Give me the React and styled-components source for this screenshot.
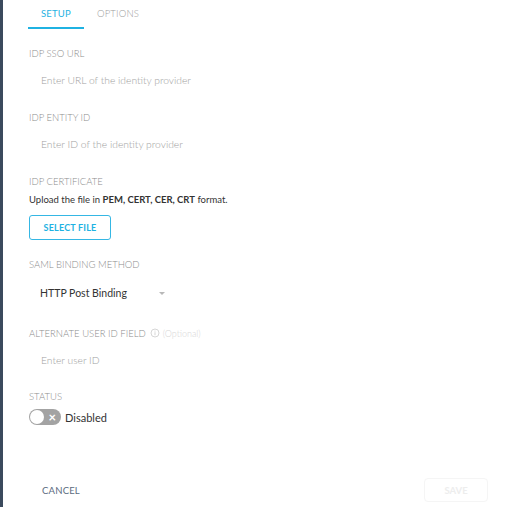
import React from 'react'
import styled, { createGlobalStyle } from 'styled-components'

const GlobalStyle = createGlobalStyle`
  html, body {
    margin: 0;
    padding: 0;
    background: #fff;
    font-family: Lato, "Open Sans", sans-serif;
  }
`

const Page = styled.div`
  display: flex;
  min-height: 100vh;
`

const SideEdge = styled.div`
  width: 3px;
  background: #3b4a5d;
  flex-shrink: 0;
`

const Main = styled.div`
  flex: 1;
  display: flex;
  flex-direction: column;
`

const Tabs = styled.div`
  display: flex;
  padding-left: 25px;
`

const Tab = styled.div`
  height: 27px;
  padding: 0 13px;
  display: flex;
  align-items: center;
  font-size: 9.5px;
  font-weight: ${p => (p.active ? 400 : 300)};
  letter-spacing: 0.2px;
  text-transform: uppercase;
  color: ${p => (p.active ? '#1fb2e2' : '#9c9c9c')};
  border-bottom: 2px solid ${p => (p.active ? '#1fb2e2' : 'transparent')};
`

const Form = styled.div`
  padding: 17px 0 0 26px;
  display: flex;
  flex-direction: column;
`

const Field = styled.div`
  display: flex;
  flex-direction: column;
  margin-bottom: ${p => p.gap || 14}px;
`

const Label = styled.div`
  display: flex;
  align-items: center;
  gap: 4px;
  height: 14px;
  font-size: 9.5px;
  font-weight: 300;
  color: #8c8c8c;
  text-transform: uppercase;
`

const Optional = styled.span`
  text-transform: none;
  color: #d6d6d6;
  font-size: 9px;
  display: flex;
  align-items: center;
  gap: 3px;
`

const Input = styled.input`
  margin-top: 4px;
  height: 32px;
  box-sizing: border-box;
  width: 300px;
  padding: 0 12px;
  border: none;
  outline: none;
  background: transparent;
  font-family: inherit;
  font-size: 10.3px;
  font-weight: 300;
  color: #333;
  &::placeholder {
    color: #9e9e9e;
  }
`

const Hint = styled.div`
  margin-top: 5px;
  font-size: 9.5px;
  line-height: 14px;
  color: #333;
  b {
    font-weight: 700;
  }
`

const OutlineButton = styled.button`
  margin-top: 8px;
  align-self: flex-start;
  width: 82px;
  height: 25px;
  box-sizing: border-box;
  border: 1px solid #35b7e4;
  border-radius: 3px;
  background: #fff;
  color: #1fb2e2;
  font-family: inherit;
  font-weight: 700;
  font-size: 9px;
  letter-spacing: 0.2px;
  cursor: pointer;
`

const SelectBox = styled.div`
  margin-top: 6px;
  height: 32px;
  width: 125px;
  padding: 0 0 0 11px;
  display: flex;
  align-items: center;
  justify-content: space-between;
  font-size: 10.5px;
  color: #333;
`

const Caret = styled.span`
  width: 0;
  height: 0;
  border-left: 3px solid transparent;
  border-right: 3px solid transparent;
  border-top: 3px solid #b8b8b8;
`

const ToggleRow = styled.div`
  margin-top: 6px;
  display: flex;
  align-items: center;
  gap: 4px;
  font-size: 11px;
  color: #333;
`

const Toggle = styled.div`
  width: 32px;
  height: 16px;
  border-radius: 8px;
  background: #a3a3a3;
  position: relative;
  display: flex;
  align-items: center;
  justify-content: flex-end;
  padding-right: 5px;
  box-sizing: border-box;
  color: #fff;
  font-size: 13px;
  font-weight: 700;
  line-height: 1;
`

const Knob = styled.span`
  position: absolute;
  left: 1px;
  top: 1px;
  width: 14px;
  height: 14px;
  border-radius: 50%;
  background: #fff;
`

const Footer = styled.div`
  margin-top: auto;
  display: flex;
  justify-content: space-between;
  align-items: center;
  padding: 0 24px 5px 27px;
`

const TextButton = styled.button`
  border: none;
  background: none;
  padding: 0 12px;
  height: 24px;
  font-family: inherit;
  font-size: 9.5px;
  color: #5b6b80;
  letter-spacing: 0.2px;
`

const SaveButton = styled.button`
  width: 64px;
  height: 24px;
  border: 1px solid #f5f5f5;
  border-radius: 4px;
  background: #fff;
  color: #ededed;
  font-family: inherit;
  font-size: 9.5px;
  font-weight: 700;
`

const InfoIcon = () => (
  <svg width="10" height="10" viewBox="0 0 10 10">
    <circle cx="5" cy="5" r="4" fill="none" stroke="#d6d6d6" strokeWidth="1" />
    <rect x="4.5" y="4.2" width="1" height="3" fill="#d6d6d6" />
    <rect x="4.5" y="2.6" width="1" height="1" fill="#d6d6d6" />
  </svg>
)

export default function App() {
  return (
    <Page>
      <GlobalStyle />
      <SideEdge />
      <Main>
        <Tabs>
          <Tab active>Setup</Tab>
          <Tab>Options</Tab>
        </Tabs>
        <Form>
          <Field>
            <Label>IDP SSO URL</Label>
            <Input placeholder="Enter URL of the identity provider" />
          </Field>
          <Field>
            <Label>IDP Entity ID</Label>
            <Input placeholder="Enter ID of the identity provider" />
          </Field>
          <Field gap={17}>
            <Label>IDP Certificate</Label>
            <Hint>
              Upload the file in <b>PEM, CERT, CER, CRT</b> format.
            </Hint>
            <OutlineButton>SELECT FILE</OutlineButton>
          </Field>
          <Field gap={17}>
            <Label>SAML Binding Method</Label>
            <SelectBox>
              HTTP Post Binding
              <Caret />
            </SelectBox>
          </Field>
          <Field gap={13}>
            <Label>
              Alternate User ID Field
              <Optional>
                <InfoIcon />
                (Optional)
              </Optional>
            </Label>
            <Input placeholder="Enter user ID" />
          </Field>
          <Field>
            <Label>Status</Label>
            <ToggleRow>
              <Toggle>
                <Knob />
                ×
              </Toggle>
              Disabled
            </ToggleRow>
          </Field>
        </Form>
        <Footer>
          <TextButton>CANCEL</TextButton>
          <SaveButton>SAVE</SaveButton>
        </Footer>
      </Main>
    </Page>
  )
}
